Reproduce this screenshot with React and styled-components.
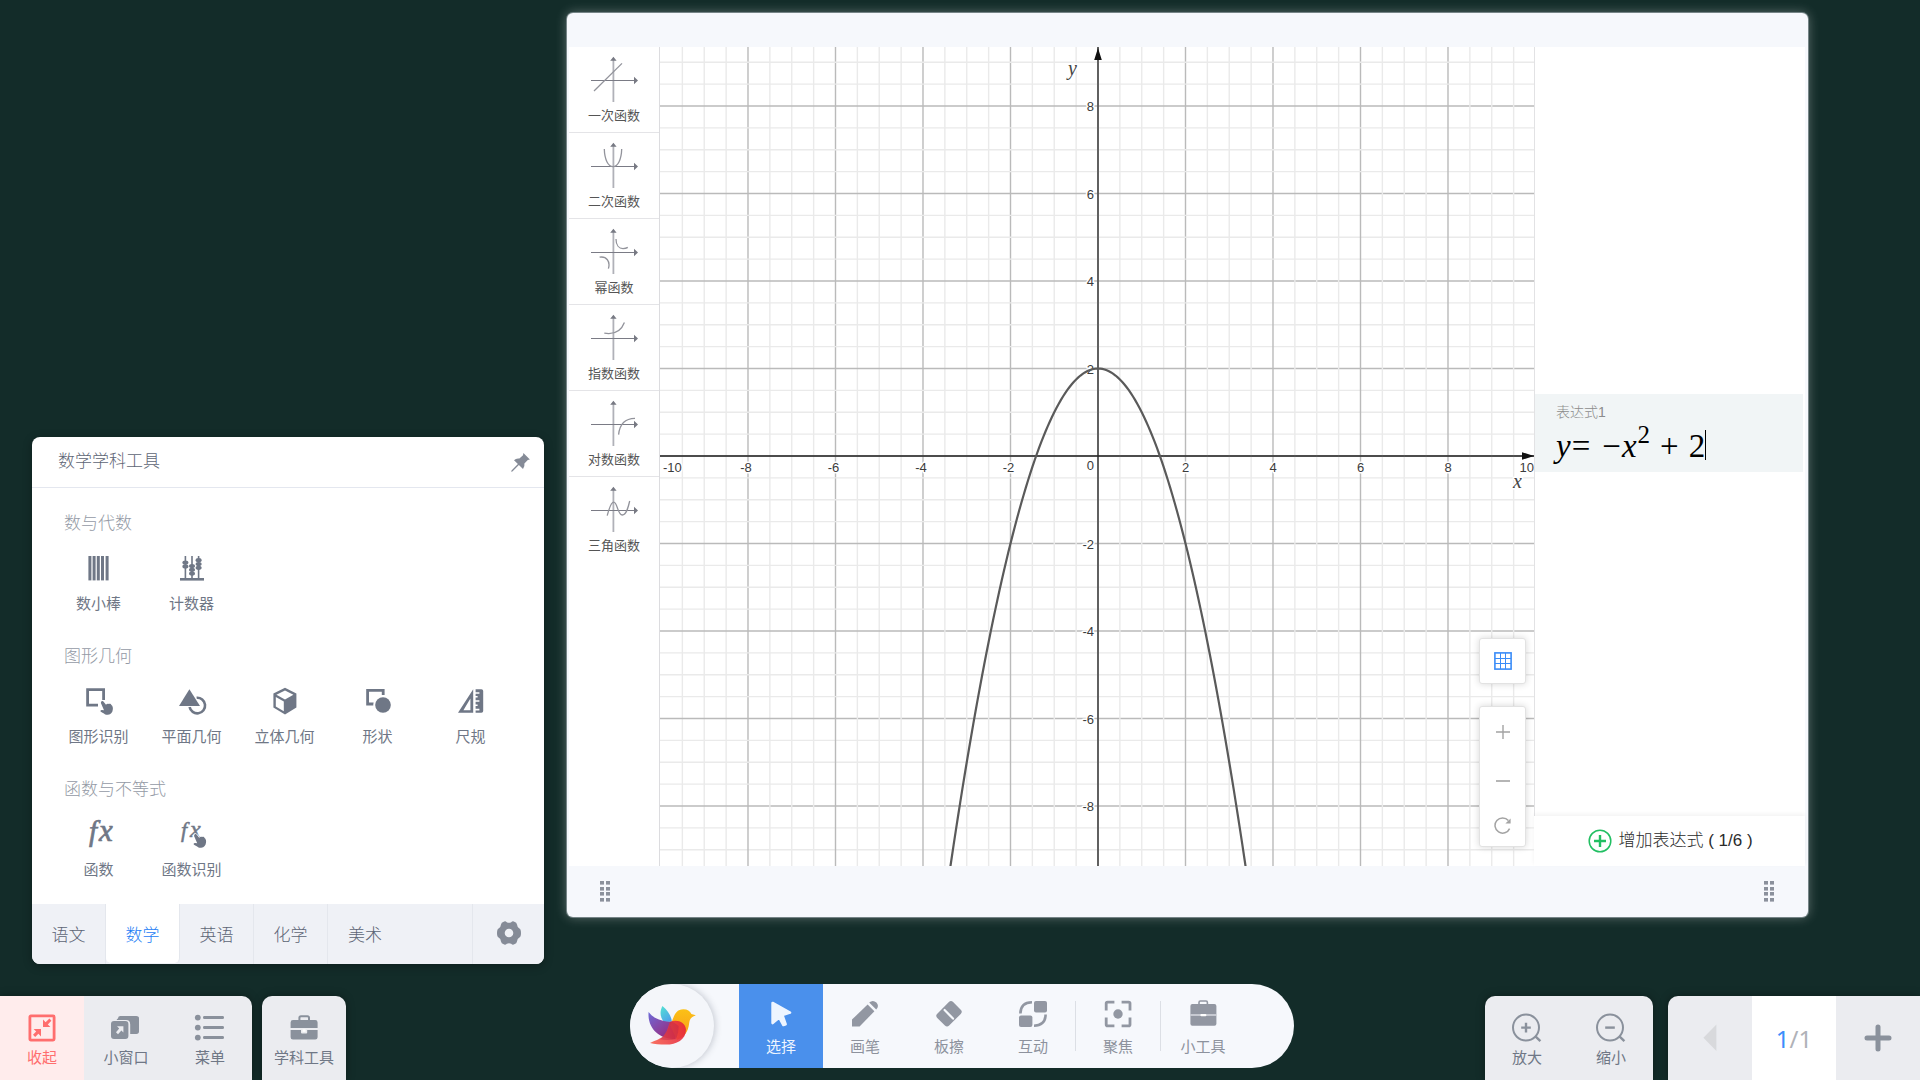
import React from "react";
import styled, { createGlobalStyle } from "styled-components";

const sans = `"Liberation Sans", "Noto Sans CJK SC", sans-serif`;
const cjk = `"Noto Sans CJK SC", "Noto Sans", sans-serif`;
const ink = "#6f7786";
const inkDark = "#5d6575";
const dockIcon = "#8a919c";
const pillIcon = "#9297a2";

const GlobalStyle = createGlobalStyle`
  *, *::before, *::after { box-sizing: border-box; }
  body { margin: 0; background: #132c29; font-family: ${cjk}; }
  button { margin: 0; padding: 0; border: 0; background: none; color: inherit; font: inherit; cursor: pointer; }
  h2, h3 { margin: 0; font-weight: 300; }
  svg { display: block; }
`;

const Desktop = styled.div`
  display: flex;
  flex-direction: column;
  height: 100vh;
  overflow: hidden;
  background: #132c29;
`;

const Stage = styled.main`
  display: flex;
  flex: 1;
  gap: 23px;
  min-height: 0;
  padding: 13px 112px 0 32px;
`;

/* ---------- subject tools ---------- */

const ToolsPanel = styled.section`
  align-self: flex-end;
  flex: none;
  width: 512px;
  margin-bottom: 20px;
  border-radius: 8px;
  overflow: hidden;
  background: #fff;
  box-shadow: 0 2px 10px rgba(0, 0, 0, 0.3);
`;

const ToolsHeader = styled.header`
  display: flex;
  align-items: center;
  justify-content: space-between;
  height: 51px;
  padding: 0 14px 0 26px;
  border-bottom: 1px solid #e4e7ef;
`;

const ToolsTitle = styled.h2`
  color: ${inkDark};
  font-size: 17px;
  line-height: 24px;
  padding-bottom: 5px;
`;

const ToolsBody = styled.div`
  display: flex;
  flex-direction: column;
  gap: 30px;
  padding: 22px 20px 25px;
`;

const SectionTitle = styled.h3`
  padding-left: 12px;
  color: #949aa5;
  font-size: 17px;
  line-height: 24px;
`;

const ToolGrid = styled.div`
  display: grid;
  grid-template-columns: repeat(5, 93px);
  padding-top: 20px;
`;

const ToolButton = styled.button`
  display: flex;
  flex-direction: column;
  align-items: center;
  gap: 11px;
  color: ${ink};
  font-size: 15px;
  line-height: 20px;
`;

const Tabs = styled.nav`
  display: flex;
  height: 60px;
  background: #eff1f6;
`;

const Tab = styled.button`
  width: 74px;
  height: ${(p) => (p.$active ? "59px" : "60px")};
  padding-bottom: ${(p) => (p.$active ? "0" : "2px")};
  border-right: ${(p) => (p.$last ? "0" : "1px solid #e4e7ed")};
  border-radius: ${(p) => (p.$active ? "0 0 5px 5px" : "0")};
  background: ${(p) => (p.$active ? "#fff" : "transparent")};
  color: ${(p) => (p.$active ? "#1e80f5" : inkDark)};
  font-size: 17px;
  font-weight: 300;
`;

const SettingsTab = styled.button`
  display: grid;
  place-items: center;
  width: 72px;
  margin-left: auto;
  padding-bottom: 3px;
  border-left: 1px solid #e4e7ed;
`;

/* ---------- function plotter window ---------- */

const PlotWindow = styled.section`
  display: flex;
  flex: 1;
  flex-direction: column;
  min-width: 0;
  margin-bottom: 67px;
  border-radius: 6px;
  background: #f6f8fc;
  box-shadow: 0 0 0 1px rgba(180, 190, 195, 0.5), 0 0 12px rgba(255, 255, 255, 0.35);
`;

const PlotTitleBar = styled.header`
  height: 34px;
`;

const PlotBody = styled.div`
  display: flex;
  flex: 1;
  min-height: 0;
  margin: 0 3px 0 2px;
  background: #fff;
`;

const FunctionList = styled.nav`
  flex: none;
  width: 91px;
  border-right: 1px solid #dcdcdf;
`;

const FunctionButton = styled.button`
  display: flex;
  flex-direction: column;
  align-items: center;
  gap: 1px;
  width: 100%;
  height: 86px;
  padding-top: 9px;
  border-bottom: 1px solid #e4e4e7;
  color: #555;
  font-family: ${cjk};
  font-size: 13px;
  line-height: 20px;

  &:last-child { border-bottom: 0; }
`;

const GraphArea = styled.div`
  position: relative;
  flex: 1;
  min-width: 0;
  overflow: hidden;
`;

const GraphSvg = styled.svg`
  width: 100%;
  height: 100%;
`;

const GraphControls = styled.div`
  position: absolute;
  right: 8px;
  bottom: 19px;
  display: flex;
  flex-direction: column;
  gap: 22px;
`;

const ControlCard = styled.div`
  display: flex;
  flex-direction: column;
  border: 1px solid #e2e2e2;
  border-radius: 3px;
  background: #fff;
  box-shadow: 0 0 7px rgba(0, 0, 0, 0.16);
`;

const ControlButton = styled.button`
  display: grid;
  place-items: center;
  width: 45px;
  height: ${(p) => p.$height}px;
`;

const ExpressionPanel = styled.aside`
  display: flex;
  flex: none;
  flex-direction: column;
  width: 271px;
`;

const ExpressionList = styled.div`
  display: flex;
  flex: 1;
  flex-direction: column;
  justify-content: center;
  padding-top: 2px;
  border-left: 1px solid #e2e2e4;
`;

const ExpressionCard = styled.div`
  height: 78px;
  margin-right: 2px;
  padding: 8px 0 0 21px;
  background: #f1f5f6;
`;

const ExpressionLabel = styled.div`
  color: #8c8c8c;
  font-family: ${sans};
  font-size: 14px;
  font-weight: 300;
  line-height: 20px;
`;

const Formula = styled.div`
  display: flex;
  align-items: baseline;
  height: 42px;
  padding-top: 4px;
  outline: none;
  color: #000;
  font-family: "Liberation Serif", serif;
  font-size: 33px;
  line-height: 40px;

  i { padding-right: 1px; }
  sup { position: relative; top: -14px; font-size: 25px; line-height: 20px; vertical-align: baseline; }
`;

const Operator = styled.span`
  margin-left: ${(p) => p.$before || 0}px;
  margin-right: ${(p) => p.$after || 0}px;
`;

const Caret = styled.span`
  align-self: center;
  width: 1px;
  height: 30px;
  background: #000;
`;

const AddExpression = styled.button`
  display: flex;
  align-items: center;
  justify-content: center;
  gap: 6px;
  height: 50px;
  padding-left: 2px;
  box-shadow: 0 -2px 4px rgba(0, 0, 0, 0.05);
  color: #2b2b2b;
  font-family: ${sans};
  font-size: 17px;
  font-weight: 300;
  line-height: 24px;
`;

const PlotFooter = styled.footer`
  display: flex;
  align-items: center;
  justify-content: space-between;
  height: 51px;
  padding: 0 34px 0 33px;
`;

/* ---------- dock ---------- */

const Dock = styled.footer`
  display: grid;
  grid-template-columns: 315fr auto 313fr;
  align-items: end;
`;

const DockSide = styled.div`
  display: flex;
  justify-content: ${(p) => (p.$end ? "flex-end" : "flex-start")};
  gap: ${(p) => (p.$end ? "15px" : "10px")};
`;

const DockGroup = styled.div`
  display: flex;
  overflow: hidden;
  border-radius: ${(p) => p.$radius};
  background: #ebecf0;
  box-shadow: 0 0 8px rgba(0, 0, 0, 0.35);
`;

const DockButton = styled.button`
  display: flex;
  flex-direction: column;
  align-items: center;
  justify-content: center;
  gap: 4px;
  width: 84px;
  height: 84px;
  padding-top: ${(p) => (p.$plain ? "0" : "4px")};
  background: ${(p) => (p.$danger ? "#ffecec" : "transparent")};
  color: ${(p) => (p.$danger ? "#ff6e6e" : ink)};
  font-size: 15px;
  line-height: 20px;
`;

const PageCounter = styled.div`
  display: grid;
  place-items: center;
  width: 84px;
  height: 84px;
  background: #fff;
  color: #b0b2b8;
  font-family: "Noto Sans", sans-serif;
  font-size: 24px;

  span { color: #3d8dfb; }
`;

const Pill = styled.nav`
  display: flex;
  margin-bottom: 12px;
  padding-right: 49px;
  overflow: hidden;
  border-radius: 42px;
  background: #f6f8fc;
`;

const LogoButton = styled.button`
  display: grid;
  place-items: center;
  width: 84px;
  height: 84px;
  margin-right: 25px;
  border-radius: 50%;
  background: #f4f6fa;
  box-shadow: 1px 0 7px rgba(40, 50, 70, 0.25);
`;

const PillButton = styled.button`
  display: flex;
  flex-direction: column;
  align-items: center;
  justify-content: center;
  gap: 8px;
  width: 84px;
  height: 84px;
  padding-top: 4px;
  background: ${(p) => (p.$active ? "#4a90ec" : "transparent")};
  color: ${(p) => (p.$active ? "#eef5ff" : "#8d929d")};
  font-size: 15px;
  line-height: 20px;
`;

const PillDivider = styled.span`
  align-self: center;
  width: 1px;
  height: 50px;
  background: #dcdfe5;
`;

/* ---------- drawings ---------- */

const Hand = ({ x, y }) => (
  <path
    transform={`translate(${x} ${y})`}
    fill={ink}
    stroke="#fff"
    strokeWidth="1.4"
    paintOrder="stroke"
    d="M1 1.2C1.9.4 2.9 1 3.4 1.8L5.6 4.6C6.3 3.4 7.6 3.2 8.5 3.8C9.5 3.4 10.6 3.8 11 4.8C12.2 5.6 12.8 7.6 12.4 9.4C12.2 12 10.6 14.4 7.6 14.6C5 14.8 4 13.6 2.6 12.8L.4 11.6C-.4 10.6.4 9.6 1.6 9.8L3.6 10L.8 3.6C.4 2.6.4 1.8 1 1.2Z"
  />
);

const toolIcons = {
  sticks: (
    <g fill={ink}>
      {[3.4, 7.6, 11.8, 16, 20.6].map((x) => <rect key={x} x={x} y="2" width="3" height="24.4" />)}
    </g>
  ),
  abacus: (
    <g fill={ink}>
      <rect x="2" y="24" width="24" height="2.6" />
      {[[7.4, [8.6, 12.4]], [14, [12, 15.8, 19.6]], [20.6, [6.2, 10, 13.8]]].map(([x, beads]) => (
        <g key={x}>
          <rect x={x - 0.8} y="2" width="1.6" height="22" />
          {beads.map((y) => <ellipse key={y} cx={x} cy={y} rx="3" ry="2.1" />)}
        </g>
      ))}
    </g>
  ),
  recognise: (
    <g>
      <path d="M13 18.2H2.6V2.6H18.6V13" fill="none" stroke={ink} strokeWidth="2.8" />
      <Hand x={15.4} y={13.2} />
    </g>
  ),
  plane: (
    <g>
      <path d="M18.6 10.8A7.8 7.8 0 1 1 11.6 20" fill="none" stroke={ink} strokeWidth="2.6" />
      <path d="M11.4 2.2L22 19H1Z" fill={ink} stroke="#fff" strokeWidth="1.6" paintOrder="stroke" />
    </g>
  ),
  cube: (
    <g>
      <path d="M14 .8L25.4 6.6V20.6L14 27.4L2.4 20.6V6.6Z" fill={ink} />
      <path d="M14 3.4L22.4 7.8L14 12.4L5.4 7.8Z" fill="#fff" />
      <path d="M4.8 10L12.8 14.4V24.2L4.8 19.4Z" fill="#fff" />
    </g>
  ),
  shape: (
    <g>
      <path d="M9.6 17H3.6V3.4H19.2V8" fill="none" stroke={ink} strokeWidth="2.8" />
      <circle cx="19" cy="18" r="9.6" fill="#fff" />
      <circle cx="19" cy="18" r="7.8" fill={ink} />
    </g>
  ),
  ruler: (
    <g fill={ink}>
      <path d="M16.2 2.2V25.8H1ZM13.4 11.4L6.4 23.2H13.4Z" fillRule="evenodd" />
      <path d="M18.6 2.2H24.4Q26.2 2.2 26.2 4V24Q26.2 25.8 24.4 25.8H18.6V23.4H22.4V21.8H18.6V19H20.6V17.4H18.6V14.8H22.4V13.2H18.6V10.6H20.6V9H18.6V6.8H22.4V5.2H18.6Z" />
    </g>
  ),
  fx: (
    <g fill={ink} stroke={ink} strokeWidth="0.7" fontFamily="Liberation Serif, serif" fontStyle="italic">
      <text x="4" y="21" fontSize="29">f</text>
      <text x="14" y="21" fontSize="31">x</text>
    </g>
  ),
  fxRecognise: (
    <g>
      <g fill={ink} stroke={ink} strokeWidth="0.5" fontFamily="Liberation Serif, serif" fontStyle="italic">
        <text x="3" y="17" fontSize="22">f</text>
        <text x="12" y="17" fontSize="24">x</text>
      </g>
      <Hand x={15.6} y={13.2} />
    </g>
  ),
};

const ToolIcon = ({ name }) => (
  <svg width="28" height="28" viewBox="0 0 28 28" overflow="visible" aria-hidden="true">{toolIcons[name]}</svg>
);

const PinIcon = () => (
  <svg width="19" height="19" viewBox="0 0 19 19" aria-hidden="true">
    <path fill="#858b97" d="M12.4 0L18.9 6.4L16.8 7L13.4 10.6Q14 13.8 12 16L7.9 12L1.4 18.5L.2 18.8L.5 17.6L6.9 11L3 7.2Q5.2 5 8.4 5.6L12 2.2Z" />
  </svg>
);

const GearIcon = () => (
  <svg width="24" height="24" viewBox="0 0 24 24" aria-hidden="true">
    <path
      fill="#858b97"
      fillRule="evenodd"
      d="M7.2.5Q8.6 0 9.8 1.2Q12 2.4 14.2 1.2Q15.4 0 16.8.5Q20 1.7 20 3.6Q20.2 6.4 22.4 7.4Q24 8.2 24 12Q24 15.8 22.4 16.6Q20.2 17.6 20 20.4Q20 22.3 16.8 23.5Q15.4 24 14.2 22.8Q12 21.6 9.8 22.8Q8.6 24 7.2 23.5Q4 22.3 4 20.4Q3.8 17.6 1.6 16.6Q0 15.8 0 12Q0 8.2 1.6 7.4Q3.8 6.4 4 3.6Q4 1.7 7.2.5ZM12 7.7A4.3 4.3 0 1 0 12 16.3A4.3 4.3 0 1 0 12 7.7Z"
    />
  </svg>
);

const curves = {
  linear: "M4 35L32 7.4",
  quadratic: "M14.3 7C14.6 18 18.4 24.6 23 24.6C27.6 24.6 31.4 18 31.7 7",
  power: "M26 11C26 17.4 29.2 20.6 33 20.6Q36 20.6 37.8 19.4M9.6 29.2C16.4 28 20.6 33.4 18.4 40.6",
  exponential: "M14.3 19.2C24.4 20.8 31.4 16.6 34.4 8.6",
  logarithm: "M28.6 34.6C29.6 24.4 35.6 18.6 45 18.4",
  trigonometric: "M17.2 29.6C19.4 21.4 21.2 16.2 23.7 16.2C27.4 16.2 27.6 29 32.3 29C36.2 29 38 22.4 39.7 15",
};

const CurveIcon = ({ name }) => (
  <svg width="48" height="48" viewBox="0 0 48 48" aria-hidden="true">
    <path d="M23.4 3V46" stroke="#b0b1b8" strokeWidth="1.8" />
    <path d="M1 24.5H45" stroke="#7a7b85" strokeWidth="1.1" />
    <path d="M23.4.8L26.6 4.8H20.2ZM48 24.5L44 28.2V20.8Z" fill="#777983" />
    <path d={curves[name]} fill="none" stroke="#92939b" strokeWidth="1.3" />
  </svg>
);

const GridIcon = () => (
  <svg width="18" height="18" viewBox="0 0 18 18" fill="none" stroke="#3a8cf8" aria-hidden="true">
    <rect x=".9" y=".9" width="16.2" height="16.2" strokeWidth="1.6" />
    <path d="M6.5 1V17M11.5 1V17M1 6.5H17M1 11.5H17" strokeWidth="1" />
  </svg>
);

const PlusIcon = () => (
  <svg width="14" height="14" viewBox="0 0 14 14" aria-hidden="true"><path d="M7 0V14M0 7H14" stroke="#a3a3a3" strokeWidth="1.4" /></svg>
);

const MinusIcon = () => (
  <svg width="14" height="14" viewBox="0 0 14 14" aria-hidden="true"><path d="M0 7H14" stroke="#a3a3a3" strokeWidth="1.6" /></svg>
);

const ResetIcon = () => (
  <svg width="17" height="17" viewBox="0 0 17 17" aria-hidden="true">
    <path d="M15.6 11.6A7.6 7.6 0 1 1 14.4 3.6" fill="none" stroke="#a3a3a3" strokeWidth="1.5" />
    <path d="M16.6 1.4V6.4H11.4Z" fill="#a3a3a3" />
  </svg>
);

const AddIcon = () => (
  <svg width="24" height="24" viewBox="0 0 24 24" fill="none" stroke="#22bf63" aria-hidden="true">
    <circle cx="12" cy="12" r="10.8" strokeWidth="1.5" />
    <path d="M12 6V18M6 12H18" strokeWidth="2.4" />
  </svg>
);

const Grip = () => (
  <svg width="10" height="21" viewBox="0 0 10 21" fill="#8b919c" aria-hidden="true">
    {[0, 6, 11, 17].map((y) => [0, 6].map((x) => <rect key={`${x}-${y}`} x={x} y={y} width="4" height="3.6" />))}
  </svg>
);

const dockIcons = {
  collapse: (
    <g fill="#ff6e6e">
      <rect x="2.9" y="2.9" width="24.2" height="24.2" rx="1" fill="none" stroke="#ff6e6e" strokeWidth="2.8" />
      <path d="M16 6.6V14H23.4L20.8 11.4L24.4 7.8L22.4 5.6L18.6 9.2ZM14 23.4V16H6.6L9.2 18.6L6 21.8L8.2 24L11.4 20.8Z" />
    </g>
  ),
  smallWindow: (
    <g fill={dockIcon}>
      <path d="M7 5.4Q7 3 9.4 3H25.4Q28 3 28 5.4V18.6Q28 21 25.4 21H19.2V11.4Q19.2 7 15 7H5.6Q6 5.6 7 5.4Z" />
      <rect x="0" y="8" width="17.4" height="18" rx="3" />
      <path d="M6 13.2H12.4V19.6L10.4 17.6L7 21.2L5 19.2L8.2 15.6Z" fill="#ebecf0" />
    </g>
  ),
  menu: (
    <g fill={dockIcon}>
      {[4.6, 14.6, 24.6].map((y) => (
        <g key={y}>
          <circle cx="2.8" cy={y} r="2.9" />
          <rect x="8" y={y - 1.5} width="21" height="3" rx="1.4" />
        </g>
      ))}
    </g>
  ),
  toolbox: (
    <g fill={dockIcon}>
      <path d="M10.4 7V4.8Q10.4 3.2 12 3.2H18.4Q20 3.2 20 4.8V7" fill="none" stroke={dockIcon} strokeWidth="2" />
      <path d="M1.6 9.4Q1.6 7 4 7H26.2Q28.6 7 28.6 9.4V15H1.6ZM1.6 17H12V19.4Q12 20.4 13 20.4H17.2Q18.2 20.4 18.2 19.4V17H28.6V24.2Q28.6 26.6 26.2 26.6H4Q1.6 26.6 1.6 24.2Z" />
      <rect x="13.6" y="16.4" width="3" height="2.4" fill="#fff" />
    </g>
  ),
  zoomIn: (
    <g fill="none" stroke={dockIcon} strokeWidth="2">
      <circle cx="14" cy="14.6" r="13" />
      <path d="M23.4 23.4L28.4 28.2" strokeWidth="2.4" />
      <path d="M14 9.8V19.4M9.2 14.6H18.8" strokeWidth="2.4" />
    </g>
  ),
  zoomOut: (
    <g fill="none" stroke={dockIcon} strokeWidth="2">
      <circle cx="14" cy="14.6" r="13" />
      <path d="M23.4 23.4L28.4 28.2" strokeWidth="2.4" />
      <path d="M9.2 14.6H18.8" strokeWidth="2.4" />
    </g>
  ),
};

const DockIcon = ({ name }) => (
  <svg width="30" height="30" viewBox="0 0 30 30" overflow="visible" aria-hidden="true">{dockIcons[name]}</svg>
);

const pillIcons = {
  select: <path d="M5.6 3L23 12.6L15.4 15L18.6 24.2L16.4 25L12.2 17.4L5.6 23Z" fill="#eef5ff" stroke="#eef5ff" strokeWidth="2.6" strokeLinejoin="round" />,
  pen: (
    <g fill={pillIcon}>
      <path d="M1 19.6L16.6 4.4L23.4 11.2L8.6 26.6H1Z" />
      <path d="M18.2 2.6Q21.8-.6 25.4 2.6Q28.6 6 25.2 9.6Z" />
    </g>
  ),
  eraser: (
    <g>
      <rect x="5.6" y="2.6" width="16.8" height="22.4" rx="3" transform="rotate(45 14 13.8)" fill={pillIcon} />
      <path d="M9.6 10L18 18.6" stroke="#f6f8fc" strokeWidth="2.2" strokeLinecap="round" />
    </g>
  ),
  interact: (
    <g fill={pillIcon}>
      <rect x="15" y="1" width="13" height="11.4" rx="2" />
      <rect x="0" y="15.6" width="13.4" height="11.4" rx="2" />
      <path d="M1.4 13.4Q1.6 2.4 13 2.2M26.6 14.6Q26.4 25.4 15 25.8" fill="none" stroke={pillIcon} strokeWidth="2.6" />
    </g>
  ),
  focus: (
    <g>
      <path d="M2.2 10.4V3.6Q2.2 2.2 3.6 2.2H10.4M17.6 2.2H24.6Q26 2.2 26 3.6V10.4M26 17.6V24.4Q26 25.8 24.6 25.8H17.6M10.4 25.8H3.6Q2.2 25.8 2.2 24.4V17.6" fill="none" stroke={pillIcon} strokeWidth="2.8" />
      <circle cx="14" cy="14" r="4.7" fill={pillIcon} />
    </g>
  ),
  kit: (
    <g>
      <path d="M10 4V2.4Q10 1 11.4 1H17Q18.4 1 18.4 2.4V4" fill="none" stroke={pillIcon} strokeWidth="1.6" />
      <rect x="1.4" y="4" width="26" height="21.8" rx="2" fill={pillIcon} />
      <path d="M1.4 15H27.4" stroke="#d7dae1" strokeWidth="1.4" />
      <rect x="11.4" y="14" width="6" height="2.2" rx="1" fill="#fff" />
    </g>
  ),
};

const PillIcon = ({ name }) => (
  <svg width="28" height="28" viewBox="0 0 28 28" overflow="visible" aria-hidden="true">{pillIcons[name]}</svg>
);

const BirdLogo = () => (
  <svg width="48" height="40" viewBox="0 0 48 40" aria-hidden="true">
    <defs>
      <linearGradient id="wing" x1="0" y1="0" x2="1" y2="1">
        <stop offset="0" stopColor="#6d6bd8" />
        <stop offset="0.6" stopColor="#8e3a94" />
        <stop offset="1" stopColor="#8a1f63" />
      </linearGradient>
      <linearGradient id="feather" x1="0" y1="0" x2="0.6" y2="1">
        <stop offset="0" stopColor="#52e3d2" />
        <stop offset="1" stopColor="#4ea4ea" />
      </linearGradient>
      <linearGradient id="body" x1="0" y1="0.6" x2="1" y2="0.4">
        <stop offset="0" stopColor="#f7604f" />
        <stop offset="1" stopColor="#e5233b" />
      </linearGradient>
      <linearGradient id="head" x1="0" y1="0" x2="0" y2="1">
        <stop offset="0" stopColor="#fbc116" />
        <stop offset="1" stopColor="#f99a1a" />
      </linearGradient>
    </defs>
    <path d="M14.4 0C20 4.6 23 9.6 24 15.8L16 16C11.4 10.6 12 4.6 14.4 0Z" fill="url(#feather)" />
    <path d="M.6 6C6 13 14 15.6 24.4 15.8L31 20L27 33C10.4 33-.8 21.6.6 6Z" fill="url(#wing)" />
    <path d="M47.8 9.2C43.4 11 41.6 13 41.2 17C40.2 26.6 36 31 29 34L22 19C25.4 14.4 25.8 3.2 35.4 3.2C39.4 3.2 42 5 43.4 8Z" fill="url(#head)" />
    <path d="M22 16C29 12.8 37.4 16.4 38 23.4C38 33.6 28.4 38.6 18 38.6C11.6 38.6 6.4 38 2 37C9.4 33.2 13.4 33.4 17 28C20 24 20.4 19.4 22 16Z" fill="url(#body)" fillOpacity="0.9" />
    <path d="M22 16C21 20 20 24 17 28C15 31 13.4 32 11 33C17 34.4 23 34 28 33C30 28 30.6 24 30.6 20L24.4 15.6Z" fill="#b01f4e" fillOpacity="0.35" />
  </svg>
);

/* ---------- coordinate plane ---------- */

const W = 874;
const H = 819;
const UNIT = 43.75;
const OX = 438;
const OY = 409;
const px = (x) => OX + x * UNIT;
const py = (y) => OY - y * UNIT;
const halfSteps = Array.from({ length: 39 }, (_, i) => (i - 19) / 2);
const evens = [-8, -6, -4, -2, 2, 4, 6, 8];
const parabola = Array.from({ length: 139 }, (_, i) => {
  const x = -3.45 + i * 0.05;
  return `${i ? "L" : "M"}${px(x).toFixed(2)} ${py(2 - x * x).toFixed(2)}`;
}).join("");

const halo = { stroke: "#fff", strokeWidth: 3, paintOrder: "stroke", strokeLinejoin: "round" };

const Graph = () => (
  <GraphSvg viewBox={`0 0 ${W} ${H}`} preserveAspectRatio="xMidYMid slice" role="img" aria-label="y = -x² + 2">
    {halfSteps.map((v) => {
      const major = v % 2 === 0;
      return (
        <g key={v} stroke={major ? "#bababa" : "#eaeaea"} strokeWidth={major ? 1.4 : 1.4}>
          <path d={`M${px(v)} 0V${H}`} />
          <path d={`M0 ${py(v)}H${W}`} />
        </g>
      );
    })}
    <path d={`M${px(0)} 0V${H}`} stroke="#555" strokeWidth="1.8" />
    <path d={`M0 ${py(0)}H${W}`} stroke="#222" strokeWidth="1.6" />
    <path d={`M${px(0)} 1L${px(0) + 3.8} 13H${px(0) - 3.8}ZM${W} ${py(0)}L${W - 12} ${py(0) + 3.8}V${py(0) - 3.8}Z`} fill="#111" />
    <g fill="#3c3c3c" fontFamily="Liberation Sans, sans-serif" fontSize="13">
      {evens.map((v) => (
        <text key={`x${v}`} x={px(v) - (v < 0 ? 2 : 0)} y="425" textAnchor="middle" {...halo}>{v}</text>
      ))}
      {evens.map((v) => (
        <text key={`y${v}`} x="434" y={py(v) + 5} textAnchor="end" {...halo}>{v}</text>
      ))}
      <text x="434" y="423" textAnchor="end" {...halo}>0</text>
      <text x="3" y="425" {...halo}>-10</text>
      <text x={W} y="425" textAnchor="end" {...halo}>10</text>
    </g>
    <g fill="#444" fontFamily="Liberation Serif, serif" fontStyle="italic" fontSize="20">
      <text x="408" y="28" {...halo}>y</text>
      <text x="853" y="441" {...halo}>x</text>
    </g>
    <path d={parabola} fill="none" stroke="#5a5a5a" strokeWidth="2.2" />
  </GraphSvg>
);

/* ---------- data ---------- */

const sections = [
  { title: "数与代数", tools: [["sticks", "数小棒"], ["abacus", "计数器"]] },
  { title: "图形几何", tools: [["recognise", "图形识别"], ["plane", "平面几何"], ["cube", "立体几何"], ["shape", "形状"], ["ruler", "尺规"]] },
  { title: "函数与不等式", tools: [["fx", "函数"], ["fxRecognise", "函数识别"]] },
];

const subjects = ["语文", "数学", "英语", "化学", "美术"];

const functions = [
  ["linear", "一次函数"],
  ["quadratic", "二次函数"],
  ["power", "幂函数"],
  ["exponential", "指数函数"],
  ["logarithm", "对数函数"],
  ["trigonometric", "三角函数"],
];

const pillTools = [
  ["select", "选择"],
  ["pen", "画笔"],
  ["eraser", "板擦"],
  ["interact", "互动"],
  ["focus", "聚焦", true],
  ["kit", "小工具", true],
];

export default function App() {
  return (
    <Desktop>
      <GlobalStyle />
      <Stage>
        <ToolsPanel>
          <ToolsHeader>
            <ToolsTitle>数学学科工具</ToolsTitle>
            <button type="button" aria-label="固定"><PinIcon /></button>
          </ToolsHeader>
          <ToolsBody>
            {sections.map((s) => (
              <section key={s.title}>
                <SectionTitle>{s.title}</SectionTitle>
                <ToolGrid>
                  {s.tools.map(([icon, label]) => (
                    <ToolButton type="button" key={label}>
                      <ToolIcon name={icon} />
                      {label}
                    </ToolButton>
                  ))}
                </ToolGrid>
              </section>
            ))}
          </ToolsBody>
          <Tabs>
            {subjects.map((s, i) => (
              <Tab type="button" key={s} $active={s === "数学"} $last={i === subjects.length - 1}>{s}</Tab>
            ))}
            <SettingsTab type="button" aria-label="设置"><GearIcon /></SettingsTab>
          </Tabs>
        </ToolsPanel>

        <PlotWindow>
          <PlotTitleBar />
          <PlotBody>
            <FunctionList>
              {functions.map(([icon, label]) => (
                <FunctionButton type="button" key={icon}>
                  <CurveIcon name={icon} />
                  {label}
                </FunctionButton>
              ))}
            </FunctionList>
            <GraphArea>
              <Graph />
              <GraphControls>
                <ControlCard>
                  <ControlButton type="button" $height={44} aria-label="网格"><GridIcon /></ControlButton>
                </ControlCard>
                <ControlCard>
                  <ControlButton type="button" $height={50} aria-label="放大坐标系"><PlusIcon /></ControlButton>
                  <ControlButton type="button" $height={48} aria-label="缩小坐标系"><MinusIcon /></ControlButton>
                  <ControlButton type="button" $height={41} aria-label="还原"><ResetIcon /></ControlButton>
                </ControlCard>
              </GraphControls>
            </GraphArea>
            <ExpressionPanel>
              <ExpressionList>
                <ExpressionCard>
                  <ExpressionLabel id="expression-1">表达式1</ExpressionLabel>
                  <Formula role="textbox" tabIndex={0} aria-labelledby="expression-1">
                    <i>y</i>
                    <Operator $after={12}>=</Operator>
                    <Operator $after={1}>−</Operator>
                    <i>x</i>
                    <sup>2</sup>
                    <Operator $before={10} $after={10}>+</Operator>
                    <span>2</span>
                    <Caret />
                  </Formula>
                </ExpressionCard>
              </ExpressionList>
              <AddExpression type="button">
                <AddIcon />
                <span>增加表达式 ( 1/6 )</span>
              </AddExpression>
            </ExpressionPanel>
          </PlotBody>
          <PlotFooter>
            <Grip />
            <Grip />
          </PlotFooter>
        </PlotWindow>
      </Stage>

      <Dock>
        <DockSide>
          <DockGroup $radius="0 10px 0 0">
            <DockButton type="button" $danger><DockIcon name="collapse" />收起</DockButton>
            <DockButton type="button"><DockIcon name="smallWindow" />小窗口</DockButton>
            <DockButton type="button"><DockIcon name="menu" />菜单</DockButton>
          </DockGroup>
          <DockGroup $radius="10px 10px 0 0">
            <DockButton type="button"><DockIcon name="toolbox" />学科工具</DockButton>
          </DockGroup>
        </DockSide>

        <Pill>
          <LogoButton type="button" aria-label="主页"><BirdLogo /></LogoButton>
          {pillTools.map(([icon, label, divided]) => (
            <React.Fragment key={icon}>
              {divided && <PillDivider />}
              <PillButton type="button" $active={icon === "select"}>
                <PillIcon name={icon} />
                {label}
              </PillButton>
            </React.Fragment>
          ))}
        </Pill>

        <DockSide $end>
          <DockGroup $radius="10px 10px 0 0">
            <DockButton type="button"><DockIcon name="zoomIn" />放大</DockButton>
            <DockButton type="button"><DockIcon name="zoomOut" />缩小</DockButton>
          </DockGroup>
          <DockGroup $radius="10px 0 0 0">
            <DockButton type="button" $plain aria-label="上一页">
              <svg width="14" height="28" viewBox="0 0 14 28" aria-hidden="true"><path d="M13.4.6V27L.4 13.8Z" fill="#d8d9dc" /></svg>
            </DockButton>
            <PageCounter><div><span>1</span>/1</div></PageCounter>
            <DockButton type="button" $plain aria-label="新增页面">
              <svg width="28" height="28" viewBox="0 0 28 28" aria-hidden="true">
                <path d="M14 3V25M3 14H25" stroke={dockIcon} strokeWidth="5" strokeLinecap="round" />
              </svg>
            </DockButton>
          </DockGroup>
        </DockSide>
      </Dock>
    </Desktop>
  );
}
